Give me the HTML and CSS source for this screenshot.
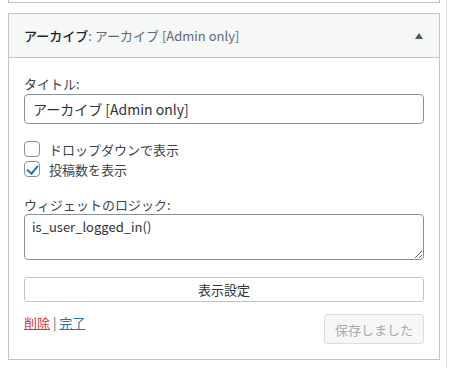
FILE: index.html
```html
<!DOCTYPE html>
<html lang="ja">
<head>
    <meta charset="UTF-8">
    <title>Widget - アーカイブ</title>
    <link rel="stylesheet" href="styles.css">
</head>
<body>
    <div class="sidebar">
        <div class="widget-prev"></div>

        <div class="widget">
            <div class="widget-top">
                <h3 class="widget-title">アーカイブ<span class="in-title">: アーカイブ [Admin only]</span></h3>
                <span class="toggle-arrow"></span>
            </div>

            <div class="widget-inside">
                <label class="field-label" for="title">タイトル:</label>
                <input type="text" id="title" class="text-input" value="アーカイブ [Admin only]">

                <div class="checks">
                    <label class="check-row"><input type="checkbox"> ドロップダウンで表示</label>
                    <label class="check-row"><input type="checkbox" checked> 投稿数を表示</label>
                </div>

                <label class="field-label" for="logic">ウィジェットのロジック:</label>
                <textarea id="logic" class="logic-input">is_user_logged_in()</textarea>

                <button type="button" class="btn-wide">表示設定</button>

                <div class="widget-actions">
                    <div class="links">
                        <a href="#" class="link-delete">削除</a> | <a href="#" class="link-done">完了</a>
                    </div>
                    <button type="button" class="btn-saved" disabled>保存しました</button>
                </div>
            </div>
        </div>
    </div>
</body>
</html>
```

FILE: styles.css
```css
* {
    margin: 0;
    padding: 0;
    box-sizing: border-box;
}

body {
    font-family: "Noto Sans CJK JP", "Noto Sans", sans-serif;
    font-size: 13px;
    color: #3c434a;
    background: #fff;
}

.sidebar {
    width: 447px;
    height: 368px;
    padding-left: 8px;
    border-right: 1px solid #dcdcde;
}

.widget-prev {
    width: 432px;
    height: 3px;
    border: 1px solid #c3c4c7;
    border-top: none;
}

.widget {
    width: 432px;
    margin-top: 10px;
    border: 1px solid #c3c4c7;
}

.widget-top {
    display: flex;
    align-items: center;
    justify-content: space-between;
    height: 44px;
    padding: 0 16px 0 15px;
    background: #f6f7f7;
    border-bottom: 1px solid #c3c4c7;
}

.widget-title {
    font-size: 13px;
    font-weight: 500;
    color: #1d2327;
}

.in-title {
    font-weight: 400;
    color: #646970;
}

.toggle-arrow {
    width: 0;
    height: 0;
    border-left: 4px solid transparent;
    border-right: 4px solid transparent;
    border-bottom: 6px solid #50575e;
}

.widget-inside {
    padding: 17px 15px 15px;
}

.field-label {
    display: block;
    line-height: 17px;
}

.text-input {
    display: block;
    width: 100%;
    height: 30px;
    margin-top: 2px;
    padding: 0 8px;
    font-family: inherit;
    font-size: 14px;
    color: #2c3338;
    border: 1px solid #8c8f94;
    border-radius: 4px;
}

.checks {
    margin: 15px 0 17px;
}

.check-row {
    display: flex;
    align-items: center;
    height: 20px;
    gap: 9px;
}

.check-row input {
    appearance: none;
    width: 16px;
    height: 16px;
    border: 1px solid #8c8f94;
    border-radius: 4px;
    background: #fff;
    position: relative;
}

.check-row input:checked::after {
    content: "";
    position: absolute;
    left: 4px;
    top: 1px;
    width: 5px;
    height: 9px;
    border: solid #2271b1;
    border-width: 0 2px 2px 0;
    transform: rotate(40deg);
}

.logic-input {
    display: block;
    width: 100%;
    height: 46px;
    margin-top: 1px;
    padding: 3px 7px;
    font-family: inherit;
    font-size: 13px;
    line-height: 18px;
    color: #2c3338;
    border: 1px solid #8c8f94;
    border-radius: 4px;
}

.btn-wide {
    display: block;
    width: 100%;
    height: 25px;
    margin-top: 17px;
    font-family: inherit;
    font-size: 13px;
    color: #2c3338;
    background: #fff;
    border: 1px solid #c3c4c7;
    border-radius: 3px;
}

.widget-actions {
    display: flex;
    justify-content: space-between;
    align-items: flex-start;
    margin-top: 12px;
}

.links {
    color: #646970;
    line-height: 18px;
}

.link-delete {
    color: #d63638;
}

.link-done {
    color: #2271b1;
}

.btn-saved {
    width: 100px;
    height: 30px;
    font-family: inherit;
    font-size: 13px;
    color: #a7aaad;
    background: #f6f7f7;
    border: 1px solid #dcdcde;
    border-radius: 3px;
}
```
